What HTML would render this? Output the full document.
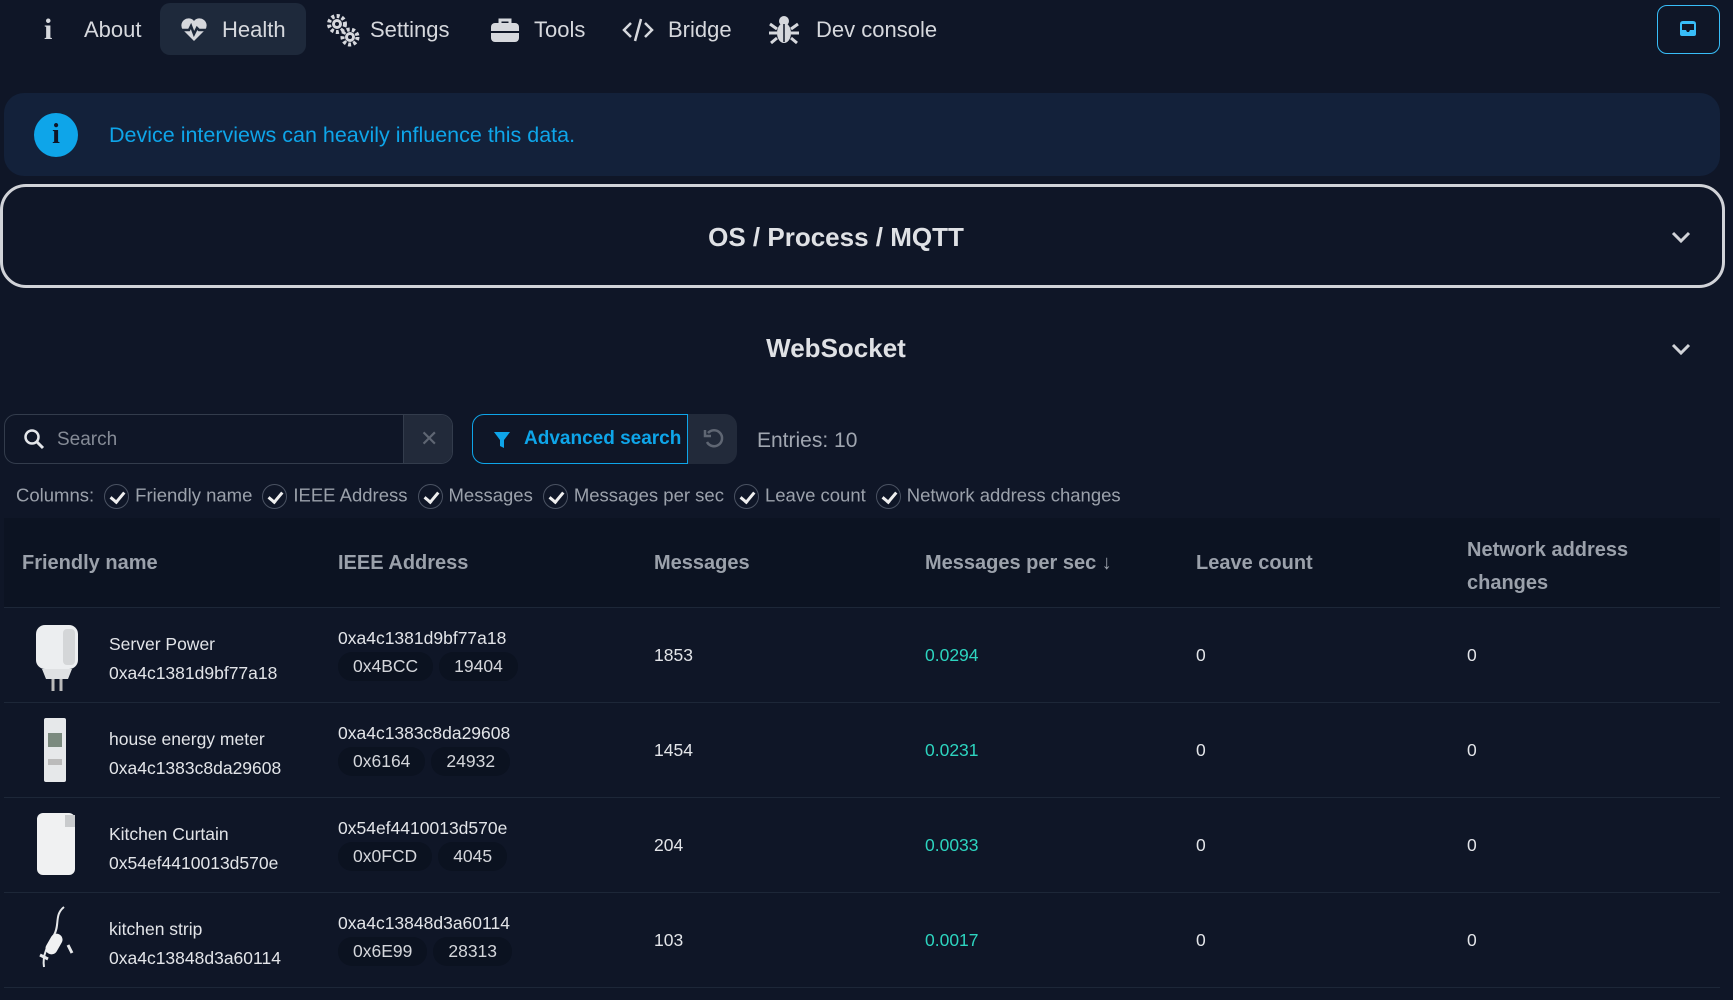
<!DOCTYPE html>
<html><head><meta charset="utf-8"><style>
*{box-sizing:border-box;margin:0;padding:0}
body{width:1733px;height:1000px;overflow:hidden;background:#0f1627;font-family:"Liberation Sans",sans-serif;color:#d4d6db;position:relative}
.abs{position:absolute}
.nav{font-size:22px;color:#d6d8dd;display:flex;align-items:center;gap:10px;top:10px;height:40px}
.pill{background:#1e293b;border-radius:10px}
.hdr{font-weight:bold;color:#9ba1ab;font-size:20px}
.cell{font-size:17.5px;color:#e2e4e8}
.badge{background:#0b1220;border-radius:14px;padding:4px 15px;font-size:17.5px;display:inline-block;margin-right:6px}
.row{position:absolute;left:4px;width:1716px;height:95px;border-bottom:1px solid #1d2738}
.chk{display:inline-block;width:25px;height:25px;border:1px solid #4a5262;border-radius:50%;vertical-align:middle;position:relative;margin:0 6px 0 10px}
.chk:after{content:"";position:absolute;left:8px;top:4px;width:6px;height:11px;border:solid #eee;border-width:0 3px 3px 0;transform:rotate(40deg)}
</style></head><body>

<div class="abs pill" style="left:160px;top:3px;width:146px;height:52px"></div>
<div class="abs nav" style="left:44px"><span style="font-family:'Liberation Serif';font-size:30px;font-weight:bold;width:12px">i</span><span style="margin-left:18px">About</span></div>
<div class="abs nav" style="left:180px"><svg width="28" height="24" viewBox="0 0 28 24"><path d="M14 23 L3 12 A6.5 6.5 0 0 1 14 3 A6.5 6.5 0 0 1 25 12 Z" fill="#d6d8dd"/><path d="M2 12h7l2-4 3 8 3-6 2 2h8" stroke="#1e293b" stroke-width="2.5" fill="none"/></svg><span style="margin-left:4px">Health</span></div>
<div class="abs nav" style="left:326px"><svg width="34" height="34" viewBox="0 0 34 34"><circle cx="11" cy="11" r="5" fill="#d6d8dd"/><circle cx="11" cy="11" r="8" fill="none" stroke="#d6d8dd" stroke-width="4" stroke-dasharray="3 2.3"/><circle cx="11" cy="11" r="2" fill="#0f1627"/><circle cx="24" cy="24" r="5" fill="#d6d8dd"/><circle cx="24" cy="24" r="7.5" fill="none" stroke="#d6d8dd" stroke-width="4" stroke-dasharray="3 2.3"/><circle cx="24" cy="24" r="2" fill="#0f1627"/></svg><span>Settings</span></div>
<div class="abs nav" style="left:490px"><svg width="30" height="26" viewBox="0 0 30 26"><path d="M10 6V3h10v3" stroke="#d6d8dd" stroke-width="3" fill="none"/><rect x="1" y="6" width="28" height="19" rx="4" fill="#d6d8dd"/><rect x="1" y="14" width="28" height="2" fill="#0f1627"/></svg><span style="margin-left:4px">Tools</span></div>
<div class="abs nav" style="left:622px"><svg width="32" height="26" viewBox="0 0 32 26"><path d="M9 6l-7 7 7 7M23 6l7 7-7 7M19 2l-6 22" stroke="#d6d8dd" stroke-width="2.5" fill="none"/></svg><span style="margin-left:4px">Bridge</span></div>
<div class="abs nav" style="left:768px"><svg width="32" height="32" viewBox="0 0 32 32"><ellipse cx="16" cy="19" rx="7" ry="10" fill="#d6d8dd"/><circle cx="16" cy="7" r="5" fill="#d6d8dd"/><path d="M2 10l7 5M30 10l-7 5M1 19h8M31 19h-8M3 29l6-5M29 29l-6-5" stroke="#d6d8dd" stroke-width="3"/><path d="M16 10v18" stroke="#0f1627" stroke-width="1.5"/></svg><span style="margin-left:6px">Dev console</span></div>
<div class="abs" style="left:1657px;top:5px;width:63px;height:49px;border:1.5px solid #38bdf8;border-radius:10px"><svg class="abs" style="left:20px;top:13px" width="20" height="19" viewBox="0 0 20 19"><path d="M2 5Q2 2 5 2H15Q18 2 18 5V15Q18 17 16 17H4Q2 17 2 15Z" fill="#38bdf8"/><path d="M4 5H16V11H12L11 13H9L8 11H4Z" fill="#0f1627"/></svg></div>

<div class="abs" style="left:4px;top:93px;width:1716px;height:83px;background:#13213a;border-radius:20px"></div>
<div class="abs" style="left:34px;top:113px;width:44px;height:44px;border-radius:50%;background:#0ea5e9;color:#0f1627;font-family:'Liberation Serif';font-weight:bold;font-size:28px;text-align:center;line-height:44px">i</div>
<div class="abs" style="left:109px;top:123px;font-size:21.5px;color:#0ea5e9">Device interviews can heavily influence this data.</div>

<div class="abs" style="left:0;top:184px;width:1725px;height:104px;border:3px solid #d1d3d8;border-radius:26px"></div>
<div class="abs" style="left:0;width:1672px;top:222px;text-align:center;font-size:26px;font-weight:bold;color:#dfe1e5">OS / Process / MQTT</div>
<svg class="abs" style="left:1671px;top:230px" width="20" height="14" viewBox="0 0 20 14"><path d="M2 3l8 8 8-8" stroke="#d1d3d8" stroke-width="3" fill="none"/></svg>
<div class="abs" style="left:0;width:1672px;top:333px;text-align:center;font-size:26px;font-weight:bold;color:#dfe1e5">WebSocket</div>
<svg class="abs" style="left:1671px;top:342px" width="20" height="14" viewBox="0 0 20 14"><path d="M2 3l8 8 8-8" stroke="#d1d3d8" stroke-width="3" fill="none"/></svg>

<div class="abs" style="left:4px;top:414px;width:449px;height:50px;border:1px solid #333c4c;border-radius:12px;overflow:hidden">
 <div class="abs" style="left:398px;top:0;width:51px;height:50px;background:#222a3a;border-left:1px solid #333c4c"></div>
</div>
<svg class="abs" style="left:23px;top:428px" width="22" height="22" viewBox="0 0 22 22"><circle cx="9" cy="9" r="6.5" stroke="#e4e6ea" stroke-width="2.5" fill="none"/><path d="M14 14l6 6" stroke="#e4e6ea" stroke-width="3"/></svg>
<div class="abs" style="left:57px;top:429px;font-size:19px;color:#858b96">Search</div>
<div class="abs" style="left:420px;top:426px;font-size:22px;color:#5f6673">✕</div>
<div class="abs" style="left:472px;top:414px;width:265px;height:50px;border-radius:12px;background:#222a3a"></div>
<div class="abs" style="left:472px;top:414px;width:216px;height:50px;border:1.5px solid #0ea5e9;border-radius:12px 0 0 12px;background:#0f1627"></div>
<svg class="abs" style="left:493px;top:430px" width="18" height="20" viewBox="0 0 18 20"><path d="M1 2H17L11 10V18L7 16V10Z" fill="#0ea5e9"/></svg>
<div class="abs" style="left:524px;top:428px;font-size:19px;font-weight:bold;color:#0ea5e9">Advanced search</div>
<svg class="abs" style="left:702px;top:427px" width="24" height="24" viewBox="0 0 24 24"><path d="M6 6A8 8 0 1 1 5 15" stroke="#5f6673" stroke-width="2.5" fill="none"/><path d="M3 3v6h6" stroke="#5f6673" stroke-width="2.5" fill="none"/></svg>
<div class="abs" style="left:757px;top:429px;font-size:21px;color:#a0a6b0">Entries: 10</div>

<div class="abs" style="left:16px;top:484px;font-size:18.5px;color:#9ba1ab;white-space:nowrap">Columns:<span class="chk"></span>Friendly name<span class="chk"></span>IEEE Address<span class="chk"></span>Messages<span class="chk"></span>Messages per sec<span class="chk"></span>Leave count<span class="chk"></span>Network address changes</div>

<div class="abs" style="left:4px;top:518px;width:1716px;height:90px;background:#0c1322;border-bottom:1px solid #1d2738"></div>
<div class="abs hdr" style="left:22px;top:552px">Friendly name</div>
<div class="abs hdr" style="left:338px;top:552px">IEEE Address</div>
<div class="abs hdr" style="left:654px;top:552px">Messages</div>
<div class="abs hdr" style="left:925px;top:552px">Messages per sec ↓</div>
<div class="abs hdr" style="left:1196px;top:552px">Leave count</div>
<div class="abs hdr" style="left:1467px;top:534px;line-height:33px">Network address<br>changes</div>

<div class="row" style="top:608px"></div>
<div class="row" style="top:703px"></div>
<div class="row" style="top:798px"></div>
<div class="row" style="top:893px"></div>

<div class="abs" style="left:0;top:608px">
 <svg class="abs" style="left:33px;top:15px" width="48" height="70" viewBox="0 0 48 70"><rect x="3" y="2" width="42" height="44" rx="9" fill="#eceef0"/><rect x="30" y="6" width="12" height="36" rx="4" fill="#d4d6d8"/><path d="M9 46h30l-4 10H13z" fill="#dfe1e3"/><path d="M20 56v12M28 56v12" stroke="#bbb" stroke-width="3"/></svg>
 <div class="abs cell" style="left:109px;top:22px;line-height:29px;white-space:nowrap">Server Power<br>0xa4c1381d9bf77a18</div>
 <div class="abs cell" style="left:338px;top:20px;white-space:nowrap">0xa4c1381d9bf77a18</div>
 <div class="abs" style="left:338px;top:44px;white-space:nowrap"><span class="badge">0x4BCC</span><span class="badge">19404</span></div>
 <div class="abs cell" style="left:654px;top:37px">1853</div>
 <div class="abs cell" style="left:925px;top:37px;color:#2dd4bf">0.0294</div>
 <div class="abs cell" style="left:1196px;top:37px">0</div>
 <div class="abs cell" style="left:1467px;top:37px">0</div>
</div>
<div class="abs" style="left:0;top:703px">
 <svg class="abs" style="left:42px;top:14px" width="26" height="66" viewBox="0 0 26 66"><rect x="2" y="1" width="22" height="64" rx="2" fill="#e6e8ea"/><rect x="6" y="16" width="14" height="14" fill="#7b8a7f"/><rect x="6" y="42" width="14" height="6" fill="#bbb"/></svg>
 <div class="abs cell" style="left:109px;top:22px;line-height:29px;white-space:nowrap">house energy meter<br>0xa4c1383c8da29608</div>
 <div class="abs cell" style="left:338px;top:20px;white-space:nowrap">0xa4c1383c8da29608</div>
 <div class="abs" style="left:338px;top:44px;white-space:nowrap"><span class="badge">0x6164</span><span class="badge">24932</span></div>
 <div class="abs cell" style="left:654px;top:37px">1454</div>
 <div class="abs cell" style="left:925px;top:37px;color:#2dd4bf">0.0231</div>
 <div class="abs cell" style="left:1196px;top:37px">0</div>
 <div class="abs cell" style="left:1467px;top:37px">0</div>
</div>
<div class="abs" style="left:0;top:798px">
 <svg class="abs" style="left:35px;top:13px" width="44" height="66" viewBox="0 0 44 66"><rect x="2" y="2" width="38" height="62" rx="6" fill="#f0f1f2"/><rect x="30" y="4" width="10" height="12" fill="#c9cbcd"/></svg>
 <div class="abs cell" style="left:109px;top:22px;line-height:29px;white-space:nowrap">Kitchen Curtain<br>0x54ef4410013d570e</div>
 <div class="abs cell" style="left:338px;top:20px;white-space:nowrap">0x54ef4410013d570e</div>
 <div class="abs" style="left:338px;top:44px;white-space:nowrap"><span class="badge">0x0FCD</span><span class="badge">4045</span></div>
 <div class="abs cell" style="left:654px;top:37px">204</div>
 <div class="abs cell" style="left:925px;top:37px;color:#2dd4bf">0.0033</div>
 <div class="abs cell" style="left:1196px;top:37px">0</div>
 <div class="abs cell" style="left:1467px;top:37px">0</div>
</div>
<div class="abs" style="left:0;top:893px">
 <svg class="abs" style="left:34px;top:12px" width="44" height="70" viewBox="0 0 44 70"><path d="M30 2C20 10 26 20 20 30S8 50 10 62" stroke="#e6e8ea" stroke-width="2" fill="none"/><rect x="14" y="28" width="12" height="22" rx="6" fill="#f0f1f2" transform="rotate(30 20 39)"/><path d="M6 50l8 4M34 40l4 8" stroke="#e6e8ea" stroke-width="3"/></svg>
 <div class="abs cell" style="left:109px;top:22px;line-height:29px;white-space:nowrap">kitchen strip<br>0xa4c13848d3a60114</div>
 <div class="abs cell" style="left:338px;top:20px;white-space:nowrap">0xa4c13848d3a60114</div>
 <div class="abs" style="left:338px;top:44px;white-space:nowrap"><span class="badge">0x6E99</span><span class="badge">28313</span></div>
 <div class="abs cell" style="left:654px;top:37px">103</div>
 <div class="abs cell" style="left:925px;top:37px;color:#2dd4bf">0.0017</div>
 <div class="abs cell" style="left:1196px;top:37px">0</div>
 <div class="abs cell" style="left:1467px;top:37px">0</div>
</div>
</body></html>
